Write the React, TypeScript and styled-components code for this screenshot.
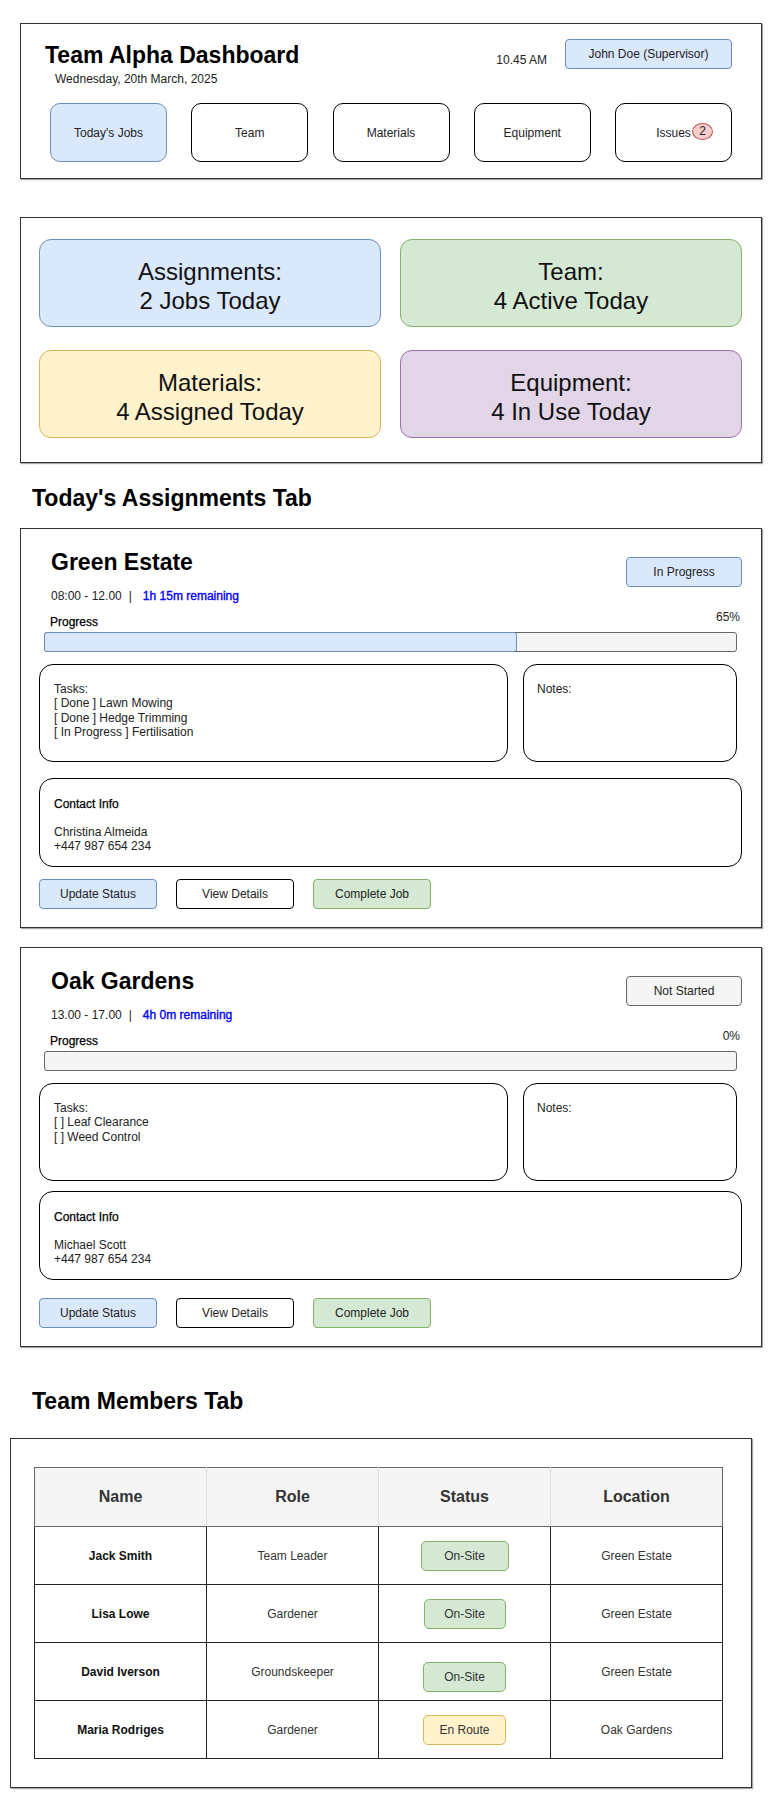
import React from "react";
import styled, { createGlobalStyle } from "styled-components";

const GlobalStyle = createGlobalStyle`
  html, body { margin: 0; padding: 0; background: #fff; }
  body { font-family: "Liberation Sans", Arial, Helvetica, sans-serif; color: #000; }
  * { box-sizing: border-box; }
`;

const tones = {
  blue: { bg: "#dae8fc", border: "#6c8ebf" },
  green: { bg: "#d5e8d4", border: "#82b366" },
  yellow: { bg: "#fff2cc", border: "#d6b656" },
  purple: { bg: "#e1d5e7", border: "#9673a6" },
  red: { bg: "#f8cecc", border: "#b85450" },
  grey: { bg: "#f5f5f5", border: "#666666" },
  white: { bg: "#ffffff", border: "#000000" },
};
type Tone = keyof typeof tones;

// layout
const Page = styled.div`
  padding: 23px 0 24px;
`;

const Panel = styled.section`
  margin-left: 20px;
  width: 742px;
  border: 1px solid #333;
  box-shadow: 1px 1px 1px rgba(0, 0, 0, 0.35);
  background: #fff;
`;

// header
const HeaderPanel = styled(Panel)`
  padding: 15px 29px 16px;
`;
const TopRow = styled.div`
  display: flex;
  justify-content: space-between;
  align-items: flex-start;
`;
const TitleBlock = styled.div`
  margin: 3px 0 0 -5px;
`;
const Title = styled.h1`
  margin: 0;
  font-size: 23px;
  font-weight: bold;
  line-height: 26px;
`;
const DateLine = styled.div`
  margin: 4px 0 0 10px;
  font-size: 12px;
  line-height: 14px;
  color: #222;
`;
const RightGroup = styled.div`
  display: flex;
  align-items: flex-start;
  gap: 18px;
`;
const Clock = styled.div`
  margin-top: 14px;
  font-size: 12px;
  line-height: 14px;
  color: #222;
`;
const UserChip = styled.div`
  width: 167px;
  height: 30px;
  display: flex;
  align-items: center;
  justify-content: center;
  background: ${tones.blue.bg};
  border: 1px solid ${tones.blue.border};
  border-radius: 4px;
  font-size: 12px;
  color: #222;
`;
const NavRow = styled.nav`
  margin-top: 17px;
  display: flex;
  justify-content: space-between;
`;
const NavButton = styled.div<{ $active?: boolean }>`
  position: relative;
  width: 117px;
  height: 59px;
  display: flex;
  align-items: center;
  justify-content: center;
  border-radius: 10px;
  border: 1px solid ${(p) => (p.$active ? tones.blue.border : "#000")};
  background: ${(p) => (p.$active ? tones.blue.bg : "#fff")};
  font-size: 12px;
  color: #222;
`;
const Badge = styled.span`
  position: absolute;
  left: 76px;
  top: 19px;
  width: 21px;
  height: 17px;
  border-radius: 50%;
  background: ${tones.red.bg};
  border: 1px solid ${tones.red.border};
  font-size: 12px;
  line-height: 15px;
  text-align: center;
`;

// stats
const StatsPanel = styled(Panel)`
  margin-top: 38px;
  padding: 21px 19px 24px 18px;
  display: grid;
  grid-template-columns: 1fr 1fr;
  column-gap: 19px;
  row-gap: 23px;
`;
const StatCard = styled.div<{ $tone: Tone }>`
  height: 88px;
  padding-top: 6px;
  display: flex;
  flex-direction: column;
  align-items: center;
  justify-content: center;
  border-radius: 12px;
  border: 1px solid ${(p) => tones[p.$tone].border};
  background: ${(p) => tones[p.$tone].bg};
  font-size: 24px;
  line-height: 29px;
  text-align: center;
  color: #111;
`;

const SectionHeading = styled.h2<{ $top: number; $bottom: number }>`
  margin: ${(p) => p.$top}px 0 ${(p) => p.$bottom}px 32px;
  font-size: 23px;
  font-weight: bold;
  line-height: 26px;
`;

// job cards
const JobCardBox = styled(Panel)<{ $top?: number }>`
  margin-top: ${(p) => p.$top ?? 0}px;
  padding: 20px 19px 18px 18px;
`;
const CardHead = styled.div`
  display: flex;
  justify-content: space-between;
  align-items: flex-start;
`;
const HeadLeft = styled.div`
  margin-left: 12px;
`;
const JobTitle = styled.h3`
  margin: 0;
  font-size: 23px;
  font-weight: bold;
  line-height: 26px;
`;
const TimeRow = styled.div`
  margin-top: 14px;
  display: flex;
  font-size: 12px;
  line-height: 14px;
  color: #222;
`;
const Sep = styled.span`
  margin: 0 11px 0 7px;
`;
const Remaining = styled.span`
  color: #0000ff;
  -webkit-text-stroke: 0.35px #0000ff;
`;
const StatusChip = styled.div<{ $tone: Tone }>`
  margin-top: 8px;
  width: 116px;
  height: 30px;
  display: flex;
  align-items: center;
  justify-content: center;
  border-radius: 4px;
  border: 1px solid ${(p) => tones[p.$tone].border};
  background: ${(p) => tones[p.$tone].bg};
  font-size: 12px;
  color: #222;
`;
const ProgressWrap = styled.div`
  margin: 7px 5px 0;
`;
const ProgressHead = styled.div`
  height: 19px;
  display: flex;
  justify-content: space-between;
  font-size: 12px;
  line-height: 14px;
`;
const ProgressLabel = styled.span`
  align-self: flex-end;
  margin-left: 6px;
  -webkit-text-stroke: 0.25px #000;
`;
const Percent = styled.span`
  align-self: flex-start;
  margin-right: -3px;
  color: #222;
`;
const Track = styled.div`
  position: relative;
  margin-top: 3px;
  height: 20px;
  border: 1px solid #666;
  border-radius: 3px;
  background: #f5f5f5;
`;
const Fill = styled.div`
  position: absolute;
  left: -1px;
  top: -1px;
  bottom: -1px;
  border: 1px solid ${tones.blue.border};
  border-radius: 3px;
  background: ${tones.blue.bg};
`;
const BoxRow = styled.div`
  margin: 12px 5px 0 0;
  display: grid;
  grid-template-columns: 1fr 214px;
  gap: 15px;
`;
const InfoBox = styled.div<{ $padLeft?: number }>`
  height: 98px;
  padding: 17px 10px 0 ${(p) => p.$padLeft ?? 14}px;
  border: 1px solid #000;
  border-radius: 14px;
  font-size: 12px;
  line-height: 14.3px;
  color: #222;
`;
const ContactBox = styled.div<{ $top: number }>`
  margin-top: ${(p) => p.$top}px;
  height: 89px;
  padding: 18px 14px 0;
  border: 1px solid #000;
  border-radius: 14px;
  font-size: 12px;
`;
const ContactTitle = styled.div`
  line-height: 14px;
  -webkit-text-stroke: 0.25px #000;
`;
const ContactLines = styled.div`
  margin-top: 15px;
  line-height: 13.5px;
  color: #222;
`;
const ActionRow = styled.div<{ $top: number }>`
  margin-top: ${(p) => p.$top}px;
  display: flex;
  gap: 19px;
`;
const ActionButton = styled.div<{ $tone: Tone }>`
  width: 118px;
  height: 30px;
  display: flex;
  align-items: center;
  justify-content: center;
  border-radius: 4px;
  border: 1px solid ${(p) => tones[p.$tone].border};
  background: ${(p) => tones[p.$tone].bg};
  font-size: 12px;
  color: #222;
`;

// team table
const TablePanel = styled(Panel)`
  margin-left: 10px;
  padding: 28px 28px 28px 23px;
`;
const MembersTable = styled.table`
  width: 689px;
  border-collapse: collapse;
  table-layout: fixed;
`;
const HeadCell = styled.th`
  height: 59px;
  padding: 0;
  background: #f5f5f5;
  border: 1px solid #666;
  border-right-color: #ddd;
  font-size: 16px;
  font-weight: bold;
  color: #333;
  &:last-child {
    border-right-color: #666;
  }
`;
const Cell = styled.td<{ $bold?: boolean }>`
  height: 58px;
  padding: 0;
  border: 1px solid #222;
  text-align: center;
  vertical-align: middle;
  font-size: 12px;
  font-weight: ${(p) => (p.$bold ? "bold" : "normal")};
  color: ${(p) => (p.$bold ? "#111" : "#333")};
`;
const Pill = styled.span<{ $tone: Tone; $w: number; $shift?: number }>`
  display: inline-flex;
  align-items: center;
  justify-content: center;
  width: ${(p) => p.$w}px;
  height: 30px;
  margin-top: ${(p) => p.$shift ?? 0}px;
  border-radius: 5px;
  border: 1px solid ${(p) => tones[p.$tone].border};
  background: ${(p) => tones[p.$tone].bg};
  font-size: 12px;
  color: #333;
`;

const navItems = ["Today's Jobs", "Team", "Materials", "Equipment", "Issues"];

const stats: { tone: Tone; label: string; value: string }[] = [
  { tone: "blue", label: "Assignments:", value: "2 Jobs Today" },
  { tone: "green", label: "Team:", value: "4 Active Today" },
  { tone: "yellow", label: "Materials:", value: "4 Assigned Today" },
  { tone: "purple", label: "Equipment:", value: "4 In Use Today" },
];

type Job = {
  name: string;
  time: string;
  remaining: string;
  status: string;
  statusTone: Tone;
  percent: string;
  bar: number;
  tasks: string[];
  contact: string;
  phone: string;
  contactTop: number;
  actionsTop: number;
};

const jobs: Job[] = [
  {
    name: "Green Estate",
    time: "08:00 - 12.00",
    remaining: "1h 15m remaining",
    status: "In Progress",
    statusTone: "blue",
    percent: "65%",
    bar: 68.5,
    tasks: ["[ Done ] Lawn Mowing", "[ Done ] Hedge Trimming", "[ In Progress ] Fertilisation"],
    contact: "Christina Almeida",
    phone: "+447 987 654 234",
    contactTop: 16,
    actionsTop: 12,
  },
  {
    name: "Oak Gardens",
    time: "13.00 - 17.00",
    remaining: "4h 0m remaining",
    status: "Not Started",
    statusTone: "grey",
    percent: "0%",
    bar: 0,
    tasks: ["[ ] Leaf Clearance", "[ ] Weed Control"],
    contact: "Michael Scott",
    phone: "+447 987 654 234",
    contactTop: 10,
    actionsTop: 18,
  },
];

const members: { name: string; role: string; status: string; tone: Tone; w: number; shift?: number; location: string }[] = [
  { name: "Jack Smith", role: "Team Leader", status: "On-Site", tone: "green", w: 88, location: "Green Estate" },
  { name: "Lisa Lowe", role: "Gardener", status: "On-Site", tone: "green", w: 82, location: "Green Estate" },
  { name: "David Iverson", role: "Groundskeeper", status: "On-Site", tone: "green", w: 83, shift: 10, location: "Green Estate" },
  { name: "Maria Rodriges", role: "Gardener", status: "En Route", tone: "yellow", w: 83, location: "Oak Gardens" },
];

const JobCard = ({ job, top }: { job: Job; top?: number }) => (
  <JobCardBox $top={top}>
    <CardHead>
      <HeadLeft>
        <JobTitle>{job.name}</JobTitle>
        <TimeRow>
          <span>{job.time}</span>
          <Sep>|</Sep>
          <Remaining>{job.remaining}</Remaining>
        </TimeRow>
      </HeadLeft>
      <StatusChip $tone={job.statusTone}>{job.status}</StatusChip>
    </CardHead>
    <ProgressWrap>
      <ProgressHead>
        <ProgressLabel>Progress</ProgressLabel>
        <Percent>{job.percent}</Percent>
      </ProgressHead>
      <Track>{job.bar > 0 && <Fill style={{ width: `${job.bar}%` }} />}</Track>
    </ProgressWrap>
    <BoxRow>
      <InfoBox>
        <div>Tasks:</div>
        {job.tasks.map((t) => (
          <div key={t}>{t}</div>
        ))}
      </InfoBox>
      <InfoBox $padLeft={13}>Notes:</InfoBox>
    </BoxRow>
    <ContactBox $top={job.contactTop}>
      <ContactTitle>Contact Info</ContactTitle>
      <ContactLines>
        <div>{job.contact}</div>
        <div>{job.phone}</div>
      </ContactLines>
    </ContactBox>
    <ActionRow $top={job.actionsTop}>
      <ActionButton $tone="blue">Update Status</ActionButton>
      <ActionButton $tone="white">View Details</ActionButton>
      <ActionButton $tone="green">Complete Job</ActionButton>
    </ActionRow>
  </JobCardBox>
);

const App = () => {
  return (
    <Page>
      <GlobalStyle />
      <HeaderPanel>
        <TopRow>
          <TitleBlock>
            <Title>Team Alpha Dashboard</Title>
            <DateLine>Wednesday, 20th March, 2025</DateLine>
          </TitleBlock>
          <RightGroup>
            <Clock>10.45 AM</Clock>
            <UserChip>John Doe (Supervisor)</UserChip>
          </RightGroup>
        </TopRow>
        <NavRow>
          {navItems.map((item, i) => (
            <NavButton key={item} $active={i === 0}>
              {item}
              {item === "Issues" && <Badge>2</Badge>}
            </NavButton>
          ))}
        </NavRow>
      </HeaderPanel>

      <StatsPanel>
        {stats.map((s) => (
          <StatCard key={s.label} $tone={s.tone}>
            <div>{s.label}</div>
            <div>{s.value}</div>
          </StatCard>
        ))}
      </StatsPanel>

      <SectionHeading $top={22} $bottom={17}>Today's Assignments Tab</SectionHeading>
      {jobs.map((job, i) => (
        <JobCard key={job.name} job={job} top={i === 0 ? 0 : 19} />
      ))}

      <SectionHeading $top={41} $bottom={24}>Team Members Tab</SectionHeading>
      <TablePanel>
        <MembersTable>
          <thead>
            <tr>
              <HeadCell>Name</HeadCell>
              <HeadCell>Role</HeadCell>
              <HeadCell>Status</HeadCell>
              <HeadCell>Location</HeadCell>
            </tr>
          </thead>
          <tbody>
            {members.map((m) => (
              <tr key={m.name}>
                <Cell $bold>{m.name}</Cell>
                <Cell>{m.role}</Cell>
                <Cell>
                  <Pill $tone={m.tone} $w={m.w} $shift={m.shift}>
                    {m.status}
                  </Pill>
                </Cell>
                <Cell>{m.location}</Cell>
              </tr>
            ))}
          </tbody>
        </MembersTable>
      </TablePanel>
    </Page>
  );
};

export default App;
